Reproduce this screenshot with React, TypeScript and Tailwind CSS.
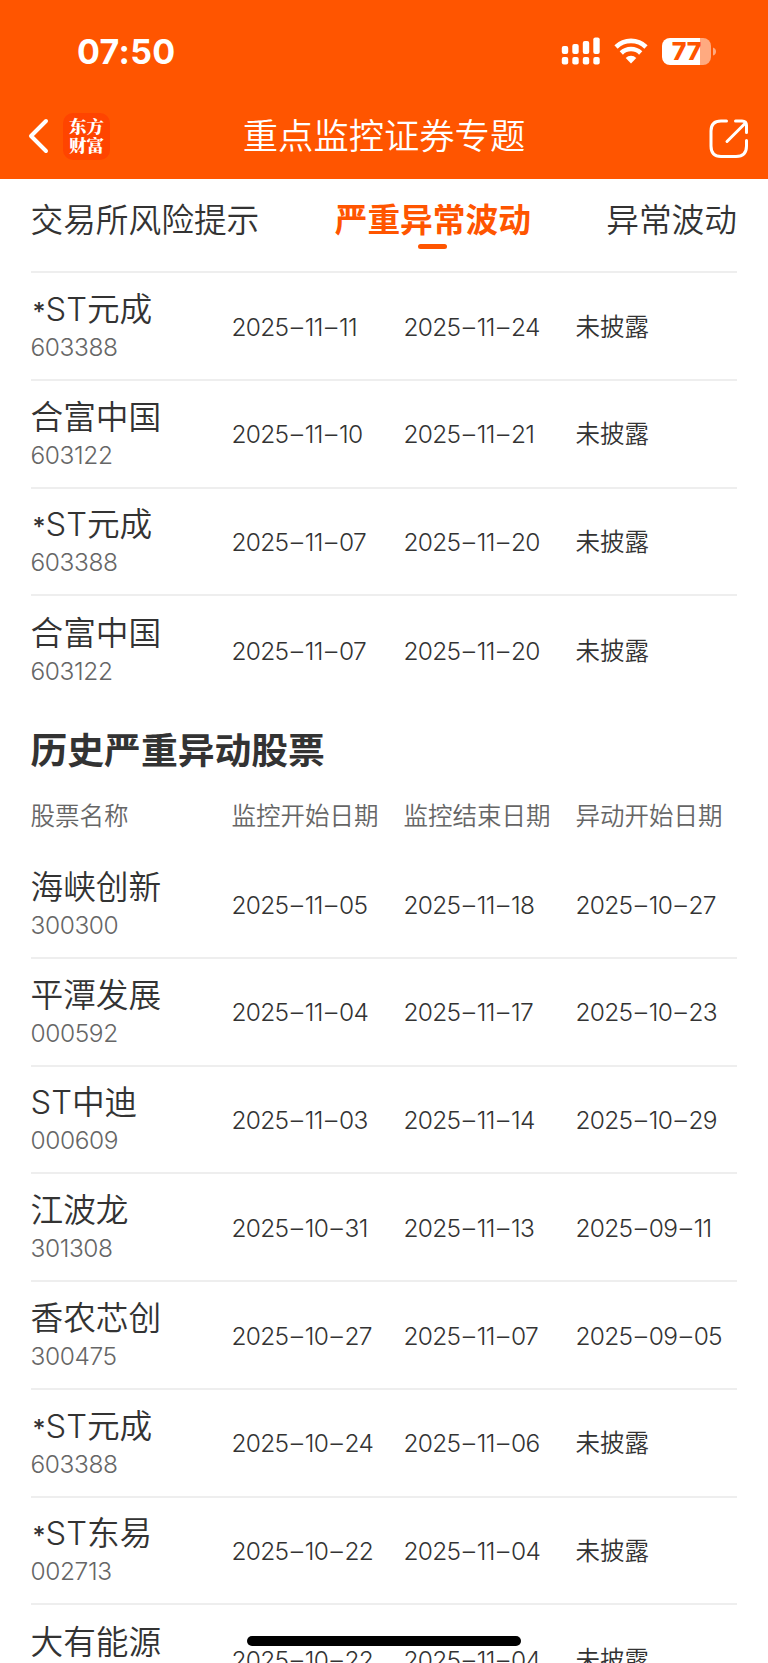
import React from "react";

interface Istock {
    name: string;
    code: string;
    start: string;
    end: string;
    moved: string;
}

const currentStocks: Istock[] = [
    { name: "*ST元成", code: "603388", start: "2025–11–11", end: "2025–11–24", moved: "未披露" },
    { name: "合富中国", code: "603122", start: "2025–11–10", end: "2025–11–21", moved: "未披露" },
    { name: "*ST元成", code: "603388", start: "2025–11–07", end: "2025–11–20", moved: "未披露" },
    { name: "合富中国", code: "603122", start: "2025–11–07", end: "2025–11–20", moved: "未披露" },
];

const historyStocks: Istock[] = [
    { name: "海峡创新", code: "300300", start: "2025–11–05", end: "2025–11–18", moved: "2025–10–27" },
    { name: "平潭发展", code: "000592", start: "2025–11–04", end: "2025–11–17", moved: "2025–10–23" },
    { name: "ST中迪", code: "000609", start: "2025–11–03", end: "2025–11–14", moved: "2025–10–29" },
    { name: "江波龙", code: "301308", start: "2025–10–31", end: "2025–11–13", moved: "2025–09–11" },
    { name: "香农芯创", code: "300475", start: "2025–10–27", end: "2025–11–07", moved: "2025–09–05" },
    { name: "*ST元成", code: "603388", start: "2025–10–24", end: "2025–11–06", moved: "未披露" },
    { name: "*ST东易", code: "002713", start: "2025–10–22", end: "2025–11–04", moved: "未披露" },
    { name: "大有能源", code: "600403", start: "2025–10–22", end: "2025–11–04", moved: "未披露" },
];

function StatusBar() {
    return (
        <div className="flex items-center justify-between h-[102px] pl-[77px] pr-[52px]">
            <span className="text-[34px] leading-none font-bold tracking-[0.3px] pt-px">07:50</span>
            <div className="flex items-center">
                <svg width="40" height="28" viewBox="0 0 40 28" fill="#fff">
                    <rect x="0.8" y="9" width="6.4" height="8" rx="2" />
                    <rect x="11.3" y="7" width="6.4" height="10" rx="2" />
                    <rect x="21.8" y="4" width="6.4" height="13" rx="2" />
                    <rect x="32.3" y="0.6" width="6.4" height="16.4" rx="2" />
                    <rect x="0.8" y="20" width="6.4" height="7.6" rx="2" />
                    <rect x="11.3" y="20" width="6.4" height="7.6" rx="2" />
                    <rect x="21.8" y="20" width="6.4" height="7.6" rx="2" />
                    <rect x="32.3" y="20" width="6.4" height="7.6" rx="2" />
                </svg>
                <svg className="ml-[13px]" width="34" height="26" viewBox="0 0 34 26" fill="none" stroke="#fff" strokeWidth="4.6">
                    <path d="M2 9 A21.5 21.5 0 0 1 32 9" />
                    <path d="M7.3 15 A13.8 13.8 0 0 1 26.7 15" />
                    <path d="M11.7 20 A7.6 7.6 0 0 1 22.3 20 L17 25.4 Z" fill="#fff" stroke="none" />
                </svg>
                <div className="ml-[14px] flex items-center justify-center w-[49px] h-[27px] rounded-[8px] bg-[linear-gradient(to_right,#fff_38px,#ffaa80_38px)]">
                    <span className="text-[25px] leading-[27px] font-extrabold text-[#ff5500] tracking-[-0.2px]">77</span>
                </div>
                <svg className="ml-[2px]" width="3" height="9" viewBox="0 0 3 9" fill="#ffaa80">
                    <path d="M0 0.5 Q3 1.5 3 4.5 Q3 7.5 0 8.5 Z" />
                </svg>
            </div>
        </div>
    )
}

function NavBar() {
    return (
        <div className="flex items-center h-[68px]">
            <div className="flex items-center w-[200px] pl-7">
                <svg width="21" height="36" viewBox="0 0 21 36" fill="none" stroke="#fff" strokeWidth="4" strokeLinecap="round" strokeLinejoin="round">
                    <path d="M18 3 L3 18 L18 33" />
                </svg>
                <div className="flex items-center justify-center ml-[14px] w-[47px] h-[47px] rounded-[10px] bg-[#ff4400] font-['Noto_Serif_CJK_SC','Noto_Sans_CJK_SC',sans-serif] font-black text-[17.5px] leading-[19.5px]">
                    <p className="pb-[2px]">东方<br />财富</p>
                </div>
            </div>
            <h1 className="grow text-center text-[35.3px] leading-none font-[350] pt-px">重点监控证券专题</h1>
            <div className="flex justify-end w-[200px] pr-[18px] pt-[5px]">
                <svg width="42" height="42" viewBox="0 0 42 42" fill="none" stroke="#fff" strokeWidth="3" strokeLinecap="round" strokeLinejoin="round">
                    <path d="M18.5 3 H13 Q3 3 3 13 V28 Q3 38.5 13 38.5 H28 Q38.5 38.5 38.5 28 V22.5" />
                    <path d="M27.5 3 H34 Q38.5 3 38.5 7.5 V14.5" />
                    <path d="M19 23.5 L37 5.5" />
                </svg>
            </div>
        </div>
    )
}

function DateText({ value }: { value: string }) {
    if (!value.includes("–")) return <span className="pt-[2px]">{value}</span>

    const [year, month, day] = value.split("–");

    return (
        <span className="pt-[2px] tracking-[-0.7px] whitespace-nowrap">
            {year}<span className="mx-[2.4px]">–</span>{month}<span className="mx-[2.4px]">–</span>{day}
        </span>
    )
}

function StockName({ name }: { name: string }) {
    const starred = name.startsWith("*");

    return (
        <span className="text-[32.7px] leading-[42px]">
            {starred && <span className="inline-block w-[15px] pl-[2px] text-[25px] leading-none font-medium">*</span>}
            {starred ? name.slice(1) : name}
        </span>
    )
}

function StockRow({ stock }: { stock: Istock }) {
    return (
        <div className="grid grid-cols-[201px_172px_172px_1fr] items-center h-[107.75px] shrink-0 text-[24.5px] font-[350] text-[#333333]">
            <div className="flex flex-col">
                <StockName name={stock.name}></StockName>
                <span className="leading-[34px] text-[#666666] tracking-[-0.4px]">{stock.code}</span>
            </div>
            <DateText value={stock.start}></DateText>
            <DateText value={stock.end}></DateText>
            <DateText value={stock.moved}></DateText>
        </div>
    )
}

export default function App() {
    return (
        <main className="relative flex flex-col w-[768px] h-[1663px] overflow-hidden bg-white font-['Inter','Noto_Sans_CJK_SC',sans-serif]">
            <header className="shrink-0 h-[179px] bg-[#ff5500] text-white">
                <StatusBar></StatusBar>
                <NavBar></NavBar>
            </header>

            <nav className="flex justify-between shrink-0 h-[92px] pl-[30.5px] pr-[31px] pt-[20px] text-[32.7px] leading-[42px] font-[350] text-[#333333]">
                <span>交易所风险提示</span>
                <div className="flex flex-col items-center text-[#ff5500] font-bold">
                    <span>严重异常波动</span>
                    <span className="mt-[3px] w-[29px] h-[5px] rounded-full bg-[#ff5500]"></span>
                </div>
                <span>异常波动</span>
            </nav>

            <section className="ml-[30.5px] mr-[31px] shrink-0 border-t-2 border-[#eeeeee] divide-y-2 divide-[#eeeeee]">
                {
                    currentStocks.map((stock, i) => {
                        return <StockRow key={i} stock={stock}></StockRow>
                    })
                }
            </section>

            <section className="ml-[30.5px] mr-[31px] shrink-0">
                <h2 className="pt-[21px] text-[36.8px] leading-[52px] font-bold text-[#333333]">历史严重异动股票</h2>
                <div className="grid grid-cols-[201px_172px_172px_1fr] mt-[22px] mb-[18px] text-[24.5px] leading-[34px] font-[350] text-[#666666]">
                    <span>股票名称</span>
                    <span>监控开始日期</span>
                    <span>监控结束日期</span>
                    <span>异动开始日期</span>
                </div>
                <div className="divide-y-2 divide-[#eeeeee]">
                    {
                        historyStocks.map((stock, i) => {
                            return <StockRow key={i} stock={stock}></StockRow>
                        })
                    }
                </div>
            </section>

            {/* home indicator */}
            <div className="absolute left-[247px] top-[1636px] w-[274px] h-[10px] rounded-full bg-black"></div>
        </main>
    )
}
